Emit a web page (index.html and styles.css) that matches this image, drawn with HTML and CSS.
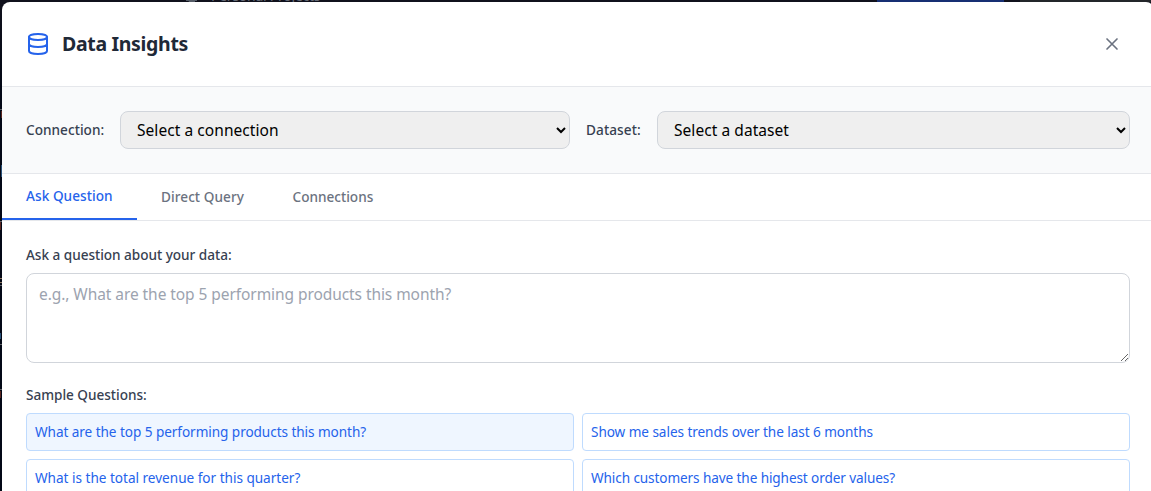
FILE: index.html
```
<!DOCTYPE html>
<html lang="en">
<head>
<meta charset="utf-8">
<title>Data Insights</title>
<link rel="stylesheet" href="styles.css">
</head>
<body>
<div class="backdrop">
  <svg class="folder-icon" width="14" height="2" viewBox="0 0 14 2"><path d="M1 0.5h11M4 0v1.5h6" fill="none" stroke="#555c67"/></svg>
  <span class="backdrop-title">Personal Projects</span>
  <span class="backdrop-primary"></span>
  <span class="backdrop-secondary"></span>
  <svg class="edge" width="2" height="491" viewBox="0 0 2 491">
    <path d="M0 109.500h2M0 221.500h2M0 285.500h2M0 344.500h2M0 389.500h2" stroke="#606268"/>
    <path d="M1.500 111v7M.5 222v8M.5 391v7" stroke="#58251f"/>
    <path d="M1.500 165v12M.5 333v6" stroke="#285078"/>
    <path d="M0 278.500h2M0 282.500h2" stroke="#8a7460"/>
  </svg>
</div>
<main class="modal">
  <header class="modal-header">
    <svg class="db-icon" width="24" height="24" viewBox="0 0 24 24"><ellipse cx="12" cy="5" rx="9" ry="3"/><path d="M3 5v14a9 3 0 0 0 18 0V5M3 12a9 3 0 0 0 18 0"/></svg>
    <h1 class="title">Data Insights</h1>
    <button class="close" aria-label="Close"><svg width="20" height="20" viewBox="0 0 24 24"><path d="M18 6 6 18M6 6l12 12"/></svg></button>
  </header>
  <section class="filters">
    <label class="label label-connection" for="connection">Connection:</label>
    <select class="select select-connection" id="connection"><option>Select a connection</option></select>
    <label class="label label-dataset" for="dataset">Dataset:</label>
    <select class="select select-dataset" id="dataset"><option>Select a dataset</option></select>
  </section>
  <nav class="tabs">
    <button class="tab tab-ask tab-active">Ask Question</button>
    <button class="tab tab-direct">Direct Query</button>
    <button class="tab">Connections</button>
  </nav>
  <section class="content">
    <label class="label heading" for="question">Ask a question about your data:</label>
    <textarea class="question" id="question" placeholder="e.g., What are the top 5 performing products this month?"></textarea>
    <h2 class="label heading samples-title">Sample Questions:</h2>
    <div class="samples">
      <button class="sample sample-active">What are the top 5 performing products this month?</button>
      <button class="sample">Show me sales trends over the last 6 months</button>
      <button class="sample sample-wide">What is the total revenue for this quarter?</button>
      <button class="sample sample-tight">Which customers have the highest order values?</button>
    </div>
  </section>
</main>
</body>
</html>
```

FILE: styles.css
```
* { box-sizing: border-box; }
body { margin: 0; height: 491px; overflow: hidden; background: #080d18; font-family: "Noto Sans", "Open Sans", sans-serif; color: #374151; }
button, select, textarea, h1, h2 { font: inherit; margin: 0; }
button { background: none; border: 0; padding: 0; white-space: nowrap; }
.backdrop { position: absolute; inset: 0; overflow: hidden; background: linear-gradient(#10111c 0 2px, #030816 90px 100%); }
.backdrop-title { position: absolute; left: 211px; top: -14px; font-size: 14px; line-height: 20px; letter-spacing: -0.25px; color: #666b76; }
.folder-icon { position: absolute; left: 185px; top: 0; }
.backdrop-primary { position: absolute; left: 877px; top: 0; width: 127px; height: 2px; background: #172f73; }
.backdrop-secondary { position: absolute; left: 1020px; top: 0; width: 131px; height: 2px; background: #23262a; }
.edge { position: absolute; left: 0; top: 0; }

.modal { position: absolute; left: 2px; top: 2px; width: 1152px; height: 489px; background: #fff; border-radius: 8px 8px 0 0; overflow: hidden; }
.modal-header { display: flex; align-items: center; height: 85px; padding: 0 32px 0 24px; border-bottom: 1px solid #e5e7eb; }
.db-icon { fill: none; stroke: #2563eb; stroke-width: 2; stroke-linecap: round; stroke-linejoin: round; }
.title { flex: 1; margin-left: 12px; font-size: 19.5px; line-height: 28px; font-weight: 700; letter-spacing: -0.33px; color: #1f2937; white-space: nowrap; }
.close { display: flex; }
.close svg { fill: none; stroke: #6b7280; stroke-width: 2; stroke-linecap: round; stroke-linejoin: round; }
.filters { display: flex; align-items: center; height: 87px; padding: 0 24px; background: #f9fafb; border-bottom: 1px solid #e5e7eb; }
.label { font-size: 13.6px; line-height: 20px; font-weight: 500; letter-spacing: -0.03px; color: #374151; white-space: nowrap; }
.label-connection { width: 94px; letter-spacing: 0.03px; }
.label-dataset { width: 71px; margin-left: 16px; letter-spacing: 0.1px; }
.select { height: 38px; padding: 0 12px; border: 1px solid #d1d5db; border-radius: 8px; background: #efefef; color: #000; font-size: 15.5px; letter-spacing: 0.06px; }
.select-connection { width: 450px; }
.select-dataset { width: 473px; }
.tabs { display: flex; height: 47px; border-bottom: 1px solid #e5e7eb; }
.tab { padding: 0 24px; font-size: 13.6px; line-height: 20px; font-weight: 500; text-align: left; color: #6b7280; }
.tab-ask { width: 135px; letter-spacing: 0.06px; }
.tab-direct { width: 131.5px; letter-spacing: 0.06px; }
.tab-active { color: #2563eb; border-bottom: 2px solid #2563eb; }
.content { padding: 24px; }
.heading { display: block; }
.question { display: block; width: 100%; height: 90px; margin-top: 8px; padding: 8px 12px; border: 1px solid #d1d5db; border-radius: 8px; font-size: 15.5px; line-height: 24px; letter-spacing: -0.07px; resize: vertical; }
.question::placeholder { color: #9ca3af; }
.samples-title { margin-top: 22px; }
.samples { display: grid; grid-template-columns: 1fr 1fr; gap: 8px; margin-top: 8px; }
.sample { height: 38px; padding: 0 8px; border: 1px solid #bfdbfe; border-radius: 4px; font-size: 13.6px; line-height: 20px; letter-spacing: -0.065px; text-align: left; color: #2563eb; }
.sample-wide { letter-spacing: -0.02px; }
.sample-tight { letter-spacing: -0.105px; }
.sample-active { background: #eff6ff; }
```
